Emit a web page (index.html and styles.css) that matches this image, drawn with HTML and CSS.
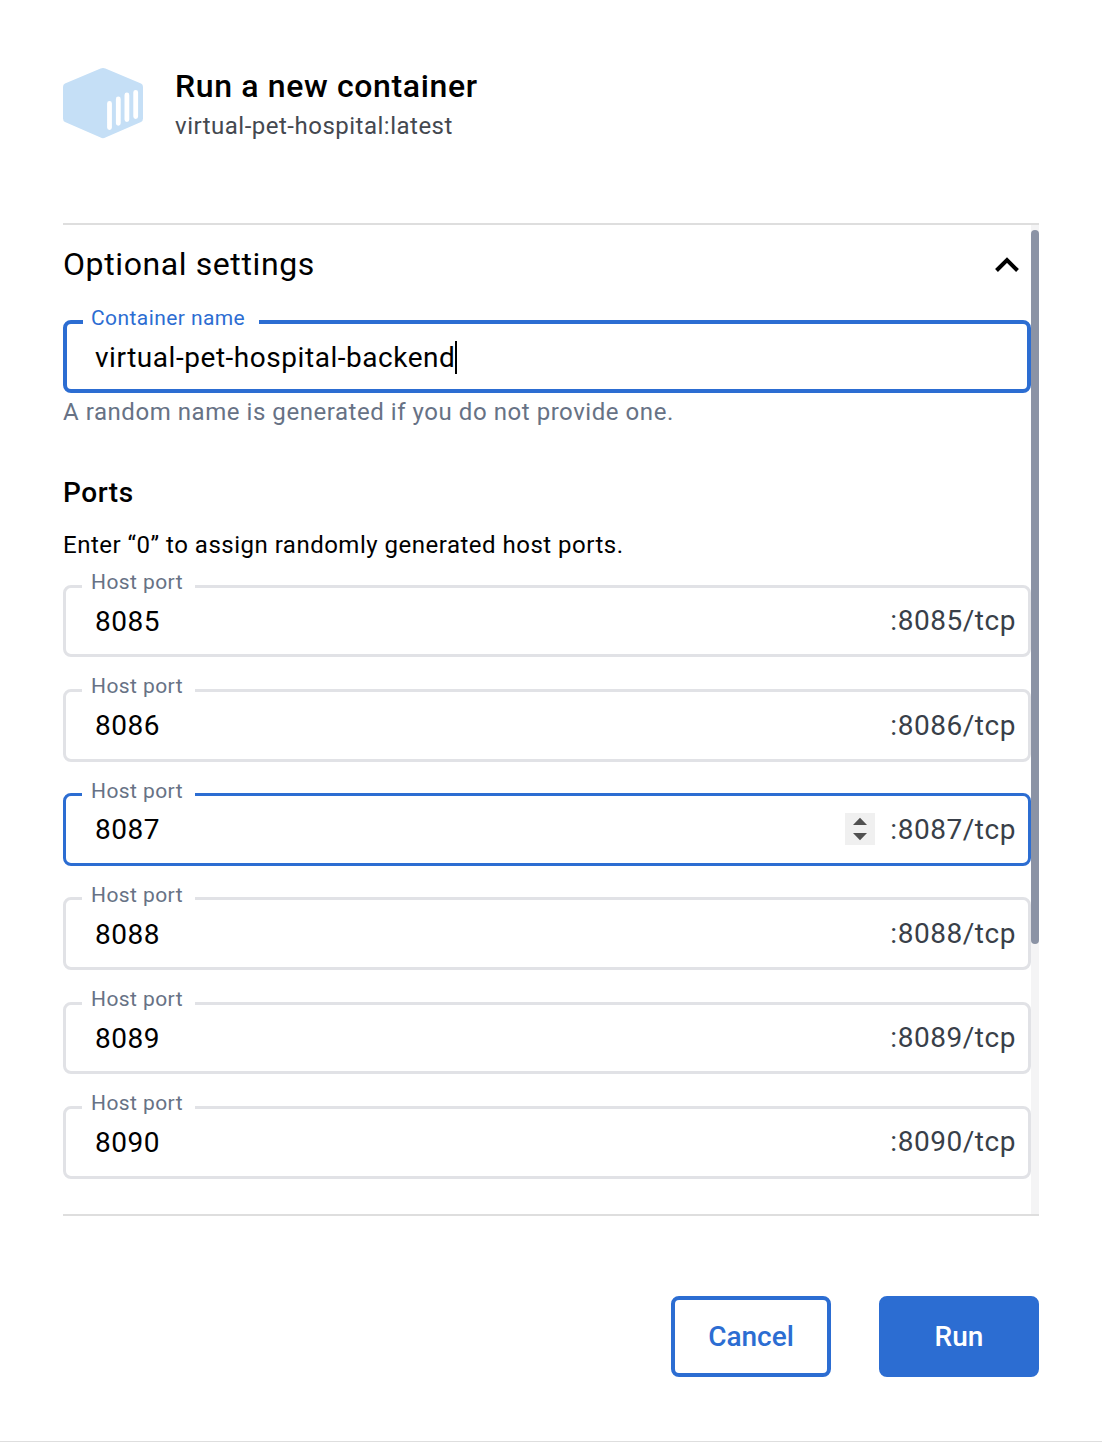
FILE: index.html
```html
<!DOCTYPE html>
<html lang="en">
<head>
<meta charset="utf-8">
<title>Run a new container</title>
<link rel="stylesheet" href="styles.css">
</head>
<body>
<main class="dialog">
  <header class="header">
    <svg class="logo" viewBox="0 0 80 72" width="80" height="72" aria-hidden="true">
      <path d="M37.6 1.5Q40 .3 42.4 1.5L78 16.6Q80 17.6 80 20V51.5Q80 53.9 78 54.9L42.4 70.6Q40 71.8 37.6 70.6L2 54.9Q0 53.9 0 51.5V20Q0 17.6 2 16.6Z" fill="#c5dff6"/>
      <path d="M46.5 36.4V60.6M55.3 32V56.3M63.9 28V52.5M72.7 25.3V49.6" stroke="#fff" stroke-width="4.8" stroke-linecap="round"/>
    </svg>
    <div class="heading">
      <h1 class="title">Run a new container</h1>
      <p class="subtitle">virtual-pet-hospital:latest</p>
    </div>
  </header>

  <section class="content">
    <div class="form">
      <div class="accordion">
        <h2 class="accordion-title">Optional settings</h2>
        <svg class="chevron" viewBox="0 0 24 16" width="24" height="16" aria-hidden="true"><path d="M1.5 13.5L12 3L22.5 13.5" fill="none" stroke="#000" stroke-width="4"/></svg>
      </div>
      <div class="field field-focused">
        <span class="label">Container name</span>
        <span class="value">virtual-pet-hospital-backend</span><span class="caret"></span>
      </div>
      <p class="helper">A random name is generated if you do not provide one.</p>

      <h3 class="ports-title">Ports</h3>
      <p class="ports-hint">Enter “0” to assign randomly generated host ports.</p>
      <div class="ports">
        <div class="field"><span class="label">Host port</span><span class="value">8085</span><span class="suffix">:8085/tcp</span></div>
        <div class="field"><span class="label">Host port</span><span class="value">8086</span><span class="suffix">:8086/tcp</span></div>
        <div class="field field-hover"><span class="label">Host port</span><span class="value">8087</span>
          <svg class="spinner" viewBox="0 0 30 32" width="30" height="32" aria-hidden="true"><path fill="#f0f0f0" d="M0 0H30V32H0z"/><path fill="#505050" d="M8 12L15 4.7L22 12zM8 20L15 27.3L22 20z"/></svg>
          <span class="suffix">:8087/tcp</span></div>
        <div class="field"><span class="label">Host port</span><span class="value">8088</span><span class="suffix">:8088/tcp</span></div>
        <div class="field"><span class="label">Host port</span><span class="value">8089</span><span class="suffix">:8089/tcp</span></div>
        <div class="field"><span class="label">Host port</span><span class="value">8090</span><span class="suffix">:8090/tcp</span></div>
      </div>
    </div>
    <div class="scrollbar"><div class="thumb"></div></div>
  </section>

  <footer class="actions">
    <button class="button button-outlined">Cancel</button>
    <button class="button button-filled">Run</button>
  </footer>
</main>
</body>
</html>
```
FILE: styles.css
```css
* { box-sizing: border-box; }

body {
  margin: 0;
  background: #fff;
  color: #000;
  font-family: Roboto, "Liberation Sans", sans-serif;
}

h1, h2, h3, p { margin: 0; font-weight: 400; }

.dialog {
  height: 1442px;
  padding: 67px 63px 0;
  border-bottom: 1px solid #dedede;
}

.header {
  display: flex;
  height: 156px;
  gap: 32px;
}

.logo { display: block; }

.title {
  font-size: 32px;
  font-weight: 500;
  line-height: 38px;
  letter-spacing: 0.64px;
}

.subtitle {
  margin-top: 5px;
  color: #44484f;
  font-size: 24px;
  line-height: 32px;
  letter-spacing: 0.5px;
}

.content {
  display: flex;
  height: 993px;
  border-top: 2px solid #dedede;
  border-bottom: 2px solid #dedede;
}

.form { width: 968px; }

.accordion {
  display: flex;
  align-items: center;
  justify-content: space-between;
  height: 78px;
  padding-right: 12px;
}

.accordion-title {
  font-size: 32px;
  line-height: 40px;
  letter-spacing: 0.6px;
}

.chevron { margin-top: 2px; }

.field {
  position: relative;
  display: flex;
  align-items: center;
  height: 72.7px;
  padding: 0 12px 0 29px;
  border: 3px solid #e1e2e6;
  border-radius: 8px;
  font-size: 28px;
  line-height: 32px;
  letter-spacing: 0.54px;
}

.accordion + .field { margin-top: 17px; }

.field-focused {
  height: 73px;
  padding-left: 28px;
  border: 4px solid #2c6dd2;
}

.field-hover { border-color: #2c6dd2; }

.label {
  position: absolute;
  top: -17.6px;
  left: 16px;
  width: 113px;
  padding-left: 9px;
  background: #fff;
  color: #677285;
  font-size: 21px;
  line-height: 24px;
  letter-spacing: 0.42px;
}

.field-focused .label {
  top: -18px;
  width: 176px;
  padding-left: 8px;
  color: #2c6dd2;
}

.value { padding-top: 1.7px; }
.field-focused .value { padding-top: 2.4px; }

.caret {
  width: 2px;
  height: 33px;
  margin-top: 1px;
  margin-left: -0.5px;
  background: #000;
}

.suffix {
  margin-left: auto;
  padding-top: 0.5px;
  color: #393f49;
}

.spinner { margin: 0 0 1px auto; }
.spinner + .suffix { margin-left: 15px; }

.helper {
  margin-top: 3px;
  color: #677285;
  font-size: 24px;
  line-height: 32px;
  letter-spacing: 0.55px;
}

.ports-title {
  margin-top: 48px;
  font-size: 28px;
  font-weight: 500;
  line-height: 34px;
  letter-spacing: 0.56px;
}

.ports-hint {
  margin-top: 19px;
  font-size: 24px;
  line-height: 32px;
  letter-spacing: 0.5px;
}

.ports {
  display: grid;
  gap: 31.55px;
  margin-top: 23.7px;
}

.scrollbar {
  width: 8px;
  padding-top: 5px;
  background: #f4f4f5;
}

.thumb {
  height: 714px;
  border-radius: 4px;
  background: #8b93a5;
}

.actions {
  display: flex;
  justify-content: flex-end;
  gap: 48px;
  margin-top: 80px;
}

.button {
  width: 160px;
  height: 81px;
  padding: 0;
  border: 4px solid #2c6dd2;
  border-radius: 8px;
  font: 500 28px/34px Roboto, "Liberation Sans", sans-serif;
}

.button-outlined { background: #fff; color: #2c6dd2; }
.button-filled { background: #2c6dd2; color: #fff; }
```
